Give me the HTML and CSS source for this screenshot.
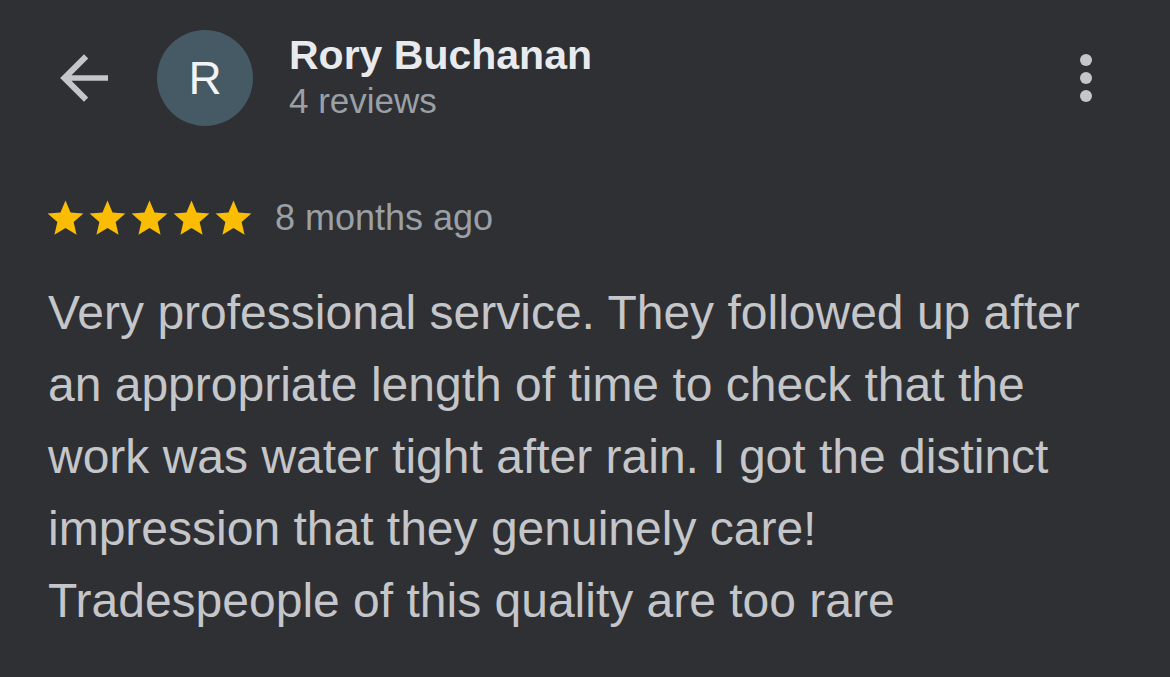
FILE: index.html
```html
<!DOCTYPE html>
<html>
<head>
<meta charset="utf-8">
<link rel="stylesheet" href="styles.css">
</head>
<body>
<div class="page">
  <header class="top">
    <svg class="back" width="72" height="72" viewBox="0 0 24 24"><path d="M20 11.05H7.83l5.59-5.59L12 4.05l-7.95 7.95L12 19.95l1.41-1.41L7.83 12.95H20z" fill="#c4c6c9"/></svg>
    <div class="avatar">R</div>
    <div class="who">
      <div class="name">Rory Buchanan</div>
      <div class="count">4 reviews</div>
    </div>
    <div class="kebab"><span></span><span></span><span></span></div>
  </header>
  <div class="meta">
    <div class="stars">
      <svg viewBox="0 0 24 24"><path d="M12 17.27L18.18 21l-1.64-7.03L22 9.24l-7.19-.61L12 2 9.19 8.63 2 9.24l5.46 4.73L5.82 21z"/></svg>
      <svg viewBox="0 0 24 24"><path d="M12 17.27L18.18 21l-1.64-7.03L22 9.24l-7.19-.61L12 2 9.19 8.63 2 9.24l5.46 4.73L5.82 21z"/></svg>
      <svg viewBox="0 0 24 24"><path d="M12 17.27L18.18 21l-1.64-7.03L22 9.24l-7.19-.61L12 2 9.19 8.63 2 9.24l5.46 4.73L5.82 21z"/></svg>
      <svg viewBox="0 0 24 24"><path d="M12 17.27L18.18 21l-1.64-7.03L22 9.24l-7.19-.61L12 2 9.19 8.63 2 9.24l5.46 4.73L5.82 21z"/></svg>
      <svg viewBox="0 0 24 24"><path d="M12 17.27L18.18 21l-1.64-7.03L22 9.24l-7.19-.61L12 2 9.19 8.63 2 9.24l5.46 4.73L5.82 21z"/></svg>
    </div>
    <span class="when">8 months ago</span>
  </div>
  <p class="body">Very professional service. They followed up after an appropriate length of time to check that the work was water tight after rain. I got the distinct impression that they genuinely care!<br>Tradespeople of this quality are too rare</p>
</div>
</body>
</html>
```
FILE: styles.css
```css
html, body { margin: 0; padding: 0; }
body {
  background: #2f3034;
  width: 1170px;
  height: 677px;
  overflow: hidden;
  font-family: "Liberation Sans", Arial, sans-serif;
}
.page { padding: 30px 48px 0 48px; }
.top {
  display: flex;
  align-items: flex-start;
  height: 96px;
}
.back { margin: 12px 0 0 0; flex: none; }
.avatar {
  flex: none;
  width: 96px;
  height: 96px;
  border-radius: 50%;
  background: #455a64;
  color: #f1f3f4;
  font-size: 46px;
  display: flex;
  align-items: center;
  justify-content: center;
  margin-left: 37px;
}
.who { margin-left: 36px; flex: 1; }
.name {
  color: #e8eaed;
  font-weight: bold;
  font-size: 41px;
  line-height: 46px;
  margin-top: 2px;
}
.count {
  color: #9aa0a6;
  font-size: 35px;
  line-height: 40px;
  margin-top: 3px;
}
.kebab {
  display: flex;
  flex-direction: column;
  gap: 6px;
  margin: 24px 30px 0 0;
}
.kebab span {
  width: 12px;
  height: 12px;
  border-radius: 50%;
  background: #c4c6c9;
}
.meta {
  display: flex;
  align-items: center;
  margin-top: 70px;
  height: 44px;
}
.stars { display: flex; margin-left: -4px; }
.stars svg { width: 43px; height: 43px; fill: #fbbc04; margin-right: -1px; }
.when {
  color: #9aa0a6;
  font-size: 36px;
  margin-left: 21px;
}
.body {
  margin: 37px 0 0 0;
  color: #c4c6c9;
  font-size: 48px;
  line-height: 72px;
}
```
